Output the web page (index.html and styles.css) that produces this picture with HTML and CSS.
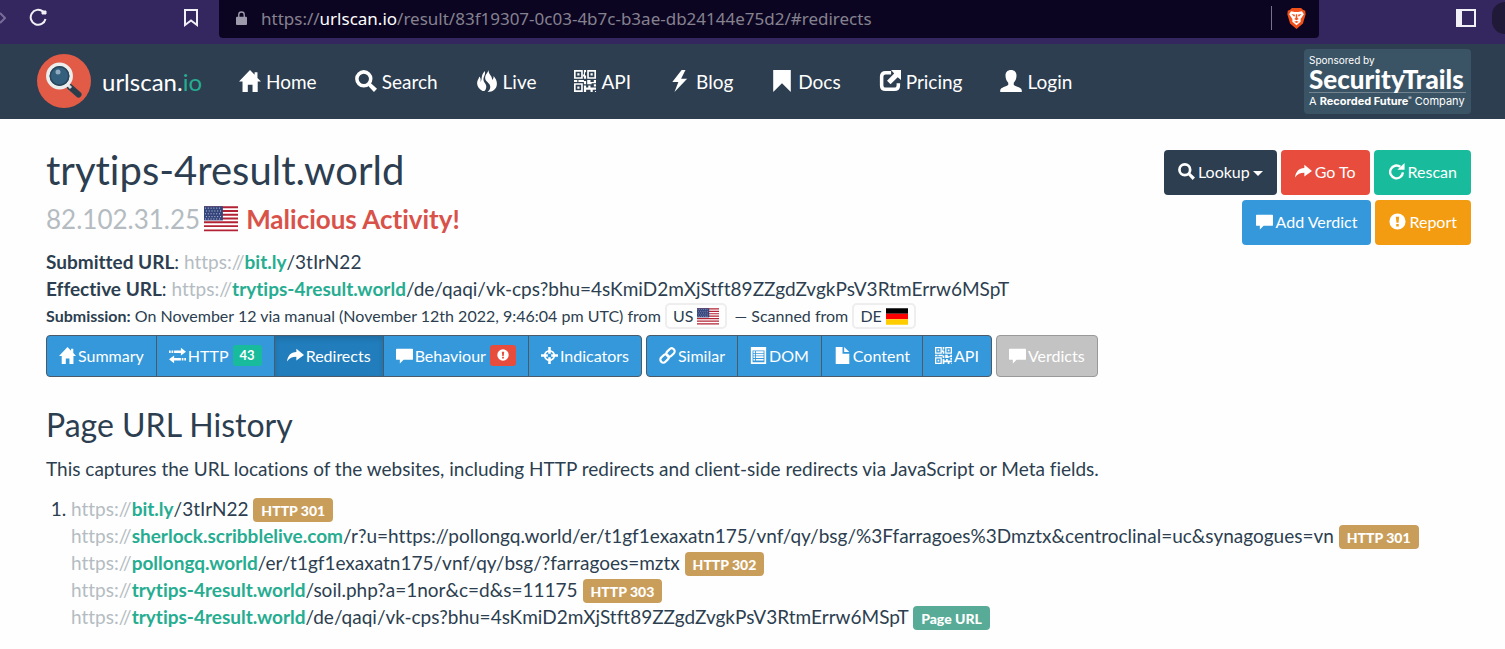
FILE: index.html
```html
<!DOCTYPE html>
<html lang="en">
<head>
  <meta charset="utf-8">
  <title>trytips-4result.world - urlscan.io</title>
  <meta name="viewport" content="width=device-width, initial-scale=1.0">
  <link rel="stylesheet" href="styles.css">
</head>
<body>
  <!-- Icon set -->
  <svg class="sprite" aria-hidden="true">
    <symbol id="home" viewBox="0 0 20 20"><path d="M10 0 L0 10.5 H3.2 V20 H8 V13.5 H12.3 V20 H17 V10.5 H20 L16.8 7.2 V2 H14.2 V4.4 Z"/></symbol>
    <symbol id="search" viewBox="0 0 20 20"><circle cx="8" cy="8" r="6.3" fill="none" stroke="currentColor" stroke-width="3.2"/><path d="M11.5 13.8 L14 11.5 L20 17 L17.2 20 Z"/></symbol>
    <symbol id="fire" viewBox="0 0 20 20"><path d="M8 1 C9 5 6.500 6 6.800 9 C7.300 12 10.500 13 9 17 C8.500 18.500 7.500 19.500 6 19 C3 17.500 1 15 1 12 C1 9.500 2.500 8.500 3 6 C4.500 7.500 4.500 9 4 11 C6 9 4 5 8 1 Z"/><path d="M11.500 0 C11 4 15 5 14.600 9 C15.800 8 16 7 16 5.500 C18 8 19 10 19 12.500 C19 17 15.500 20 10.500 20 C13 18 13.500 16 12.500 13.500 C11.500 11 8 10 8.300 6.500 C8.500 4 10.500 3 11.500 0 Z"/></symbol>
    <symbol id="qrcode" viewBox="0 0 20 20"><path fill-rule="evenodd" d="M0 0H8V8H0Z M1.500 1.500V6.500H6.500V1.500Z M12 0H20V8H12Z M13.500 1.500V6.500H18.500V1.500Z M0 12H8V20H0Z M1.500 13.500V18.500H6.500V13.500Z"/><path d="M3 3H5V5H3Z M15 3H17V5H15Z M3 15H5V17H3Z M9 0H11V2H10V5H11V8H9V6H8V4H9Z M0 9H3V11H0Z M4 9H9V10H11V13H9V11H4Z M12 9H15V11H18V9H20V12H16V13H12Z M9 14H11V16H13V18H11V20H9Z M13 14H15V16H20V18H17V20H15V18H13Z M18 13H20V15H18Z M19 19H20V20H19Z"/></symbol>
    <symbol id="flash" viewBox="0 0 20 20"><path d="M11.500 0 L3 11 H8.500 L5 20 L16.500 8 H11 L15 0 Z"/></symbol>
    <symbol id="bookmark" viewBox="0 0 20 20"><path d="M2 0H18V20L10 12L2 20Z"/></symbol>
    <symbol id="newwin" viewBox="0 0 20 20"><path d="M11 2.400 H6 Q2.400 2.400 2.400 6 V14 Q2.400 17.600 6 17.600 H14 Q17.600 17.600 17.600 14 V12" fill="none" stroke="currentColor" stroke-width="3.200"/><path d="M11 0H20V9L17 6.500L10.500 13L7.300 9.800L13.800 3.200Z"/></symbol>
    <symbol id="user" viewBox="0 0 20 20"><path d="M10 0 C13 0 15 2 15 5 C15 8 14 10 12.500 11.500 V13.500 C14 15.500 19.500 15.500 19.800 18.500 V20 H0.200 V18.500 C0.500 15.500 6 15.500 7.500 13.500 V11.500 C6 10 5 8 5 5 C5 2 7 0 10 0Z"/></symbol>
    <symbol id="share" viewBox="0 0 20 20"><path d="M0 17 C1 10 4.500 6.500 11 6 V2 L20 9.500 L11 16 V11.500 C6 11.500 3 13 0 17Z"/></symbol>
    <symbol id="repeat" viewBox="0 0 20 20"><path d="M14.500 4.500 A7.500 7.500 0 1 0 17.500 11" fill="none" stroke="currentColor" stroke-width="2.800"/><path d="M11 8H19.500V0Z"/></symbol>
    <symbol id="comment" viewBox="0 0 20 20"><path d="M1 2H19Q20 2 20 3V14Q20 15 19 15H9L4.500 19.500V15H1Q0 15 0 14V3Q0 2 1 2Z"/></symbol>
    <symbol id="alert" viewBox="0 0 20 20"><path fill-rule="evenodd" d="M10 0.500A9.500 9.500 0 1 1 10 19.500A9.500 9.500 0 1 1 10 0.500Z M8 4.500L8.800 11.500H11.200L12 4.500Z M8.500 13H11.500V16H8.500Z"/></symbol>
    <symbol id="transfer" viewBox="0 0 20 20"><path d="M0 4H2V7H0Z M3 4H5V7H3Z M6 4H14V1L20 5.500L14 10V7H6Z M20 13H18V16H20Z M17 13H15V16H17Z M14 13H6V10L0 14.500L6 19V16H14Z"/></symbol>
    <symbol id="target" viewBox="0 0 20 20"><circle cx="10" cy="10" r="5.500" fill="none" stroke="currentColor" stroke-width="2.200"/><path d="M8.500 0H11.500V8H8.500Z M8.500 12H11.500V20H8.500Z M0 8.500H8V11.500H0Z M12 8.500H20V11.500H12Z"/></symbol>
    <symbol id="link" viewBox="0 0 20 20"><g fill="none" stroke="currentColor" stroke-width="2.600"><rect x="8" y="3" width="11" height="7" rx="3.500" transform="rotate(-45 13.500 6.500)"/><rect x="1" y="10" width="11" height="7" rx="3.500" transform="rotate(-45 6.500 13.500)"/></g></symbol>
    <symbol id="listalt" viewBox="0 0 20 20"><path fill-rule="evenodd" d="M1 0H19V20H1Z M3 4V18H17V4Z"/><path d="M4 5H6V7H4Z M7 5H16V7H7Z M4 8H6V10H4Z M7 8H16V10H7Z M4 11H6V13H4Z M7 11H16V13H7Z M4 14H6V16H4Z M7 14H16V16H7Z"/></symbol>
    <symbol id="file" viewBox="0 0 20 20"><path d="M2 0H10V8H18V20H2Z M12 0L18 6H12Z"/></symbol>
    <symbol id="us" viewBox="0 0 36 27"><path fill="#fff" d="M0 0H36V27H0Z"/><path stroke="#b22234" stroke-width="2" d="M0 1H36M0 5H36M0 9H36M0 13H36M0 17H36M0 21H36M0 25.500H36"/><path fill="#34457c" d="M0 0H20V15H0Z"/><path stroke="#dde" stroke-width="1" stroke-dasharray="1 2" d="M1 2H19M2 5H19M1 8H19M2 11H19M1 13.500H19"/></symbol>
    <symbol id="de" viewBox="0 0 24 18"><path d="M0 0H24V6H0Z" fill="#000"/><path d="M0 6H24V12H0Z" fill="#f00"/><path d="M0 12H24V18H0Z" fill="#fc0"/></symbol>
  </svg>

  <!-- Browser toolbar -->
  <div class="toolbar">
    <svg class="forward" viewBox="0 0 6 12"><path d="M0 1L5 6L0 11"/></svg>
    <button class="tool reload" aria-label="Reload"><svg viewBox="0 0 20 20"><path d="M14 3.500A7.500 7.500 0 1 0 16.500 11"/><path class="dot" d="M13 3H17V6H13Z"/></svg></button>
    <button class="tool mark" aria-label="Bookmark"><svg viewBox="0 0 20 20"><path d="M4 2H16V17L10 12.500L4 17Z"/></svg></button>
    <div class="address">
      <svg class="lock" viewBox="0 0 12 15"><path d="M3 7V4A3 3 0 0 1 9 4V7" fill="none" stroke="#9d9aab" stroke-width="1.500"/><rect y="6" width="12" height="9" rx="1" fill="#9d9aab"/></svg>
      <span class="location">https://<b>urlscan.io</b>/result/83f19307-0c03-4b7c-b3ae-db24144e75d2/#redirects</span>
      <svg class="brave" viewBox="0 0 20 24"><path fill="#f1501b" d="M5 1H15L17 3L19.500 4L20 8L17 18L10 24L3 18L0 8L.5 4L3 3Z"/><path fill="#fff" d="M4 4.500L8 5.500H12L16 4.500L18 8L14.500 13L14.500 16L10 20L5.500 16L5.500 13L2 8Z"/><path fill="#f1501b" d="M4.500 7.500L8.500 8.500L7.500 10.500ZM15.500 7.500L11.500 8.500L12.500 10.500ZM9.300 8H10.700L11 12L12.500 13L10 14.500L7.500 13L9 12ZM7.500 16L10 15.300L12.500 16L10 17.500Z"/></svg>
    </div>
    <button class="tool panel" aria-label="Sidebar"><svg viewBox="0 0 20 20"><path d="M1 2H19V18H1Z"/><path class="solid" d="M1 2H5V18H1Z"/></svg></button>
    <span class="profile"></span>
  </div>

  <!-- Site header -->
  <header class="navbar">
    <a class="brand" href="#">
      <svg class="logo" viewBox="0 0 54 54"><circle cx="27" cy="27" r="27" fill="#e15b47"/><path d="M33 33L41.500 40.500" stroke="#2b3d4b" stroke-width="6" stroke-linecap="round"/><path d="M30 30L34 34" stroke="#d9dcdd" stroke-width="3"/><circle cx="22.500" cy="22" r="11.700" fill="#34607d" stroke="#eceeee" stroke-width="3.500"/><circle cx="22.500" cy="22" r="9.200" fill="none" stroke="#2b4659" stroke-width="1.500"/><circle cx="21" cy="18" r="2.500" fill="#90abc0"/></svg>
      <span>urlscan.<span class="tld">io</span></span>
    </a>
    <nav class="menu">
      <a href="#"><svg class="icon"><use href="#home"/></svg>Home</a>
      <a href="#"><svg class="icon"><use href="#search"/></svg>Search</a>
      <a href="#"><svg class="icon"><use href="#fire"/></svg>Live</a>
      <a href="#"><svg class="icon"><use href="#qrcode"/></svg>API</a>
      <a href="#"><svg class="icon"><use href="#flash"/></svg>Blog</a>
      <a href="#"><svg class="icon"><use href="#bookmark"/></svg>Docs</a>
      <a href="#"><svg class="icon"><use href="#newwin"/></svg>Pricing</a>
      <a href="#"><svg class="icon"><use href="#user"/></svg>Login</a>
    </nav>
    <a class="sponsor" href="#">
      <span class="sponsor-by">Sponsored by</span>
      <span class="sponsor-name">SecurityTrails</span>
      <span class="sponsor-of">A <b>Recorded Future</b><sup>®</sup> Company</span>
    </a>
  </header>

  <main class="container">
    <div class="summary">
      <div class="result">
        <h1>trytips-4result.world</h1>
        <h2 class="verdict"><span class="muted">82.102.31.25</span><svg class="flag-lg"><use href="#us"/></svg><b>Malicious Activity!</b></h2>
        <p class="url"><b>Submitted URL</b>: <span class="muted">https://</span><b class="domain">bit.ly</b>/3tIrN22</p>
        <p class="url"><b>Effective URL</b>: <span class="muted">https://</span><b class="domain">trytips-4result.world</b>/de/qaqi/vk-cps?bhu=4sKmiD2mXjStft89ZZgdZvgkPsV3RtmErrw6MSpT</p>
        <p class="submission"><b>Submission:</b> On November 12 via manual (November 12th 2022, 9:46:04 pm UTC) from <span class="country">US <svg class="flag"><use href="#us"/></svg></span> <span class="scanned">— Scanned from</span> <span class="country">DE <svg class="flag"><use href="#de"/></svg></span></p>
      </div>
      <div class="actions">
        <div class="row">
          <button class="btn lookup"><svg class="icon"><use href="#search"/></svg>Lookup<span class="caret"></span></button>
          <button class="btn goto"><svg class="icon"><use href="#share"/></svg>Go To</button>
          <button class="btn rescan"><svg class="icon"><use href="#repeat"/></svg>Rescan</button>
        </div>
        <div class="row">
          <button class="btn add"><svg class="icon"><use href="#comment"/></svg>Add Verdict</button>
          <button class="btn report"><svg class="icon"><use href="#alert"/></svg>Report</button>
        </div>
      </div>
    </div>

    <div class="tabs">
      <div class="group">
        <button class="tab"><svg class="icon"><use href="#home"/></svg>Summary</button>
        <button class="tab"><svg class="icon"><use href="#transfer"/></svg>HTTP <span class="count">43</span></button>
        <button class="tab active"><svg class="icon"><use href="#share"/></svg>Redirects</button>
        <button class="tab"><svg class="icon"><use href="#comment"/></svg>Behaviour <span class="count danger"><svg><use href="#alert"/></svg></span></button>
        <button class="tab"><svg class="icon"><use href="#target"/></svg>Indicators</button>
      </div>
      <div class="group">
        <button class="tab"><svg class="icon"><use href="#link"/></svg>Similar</button>
        <button class="tab"><svg class="icon"><use href="#listalt"/></svg>DOM</button>
        <button class="tab"><svg class="icon"><use href="#file"/></svg>Content</button>
        <button class="tab"><svg class="icon"><use href="#qrcode"/></svg>API</button>
      </div>
      <div class="group">
        <button class="tab off" disabled><svg class="icon"><use href="#comment"/></svg>Verdicts</button>
      </div>
    </div>

    <h2 class="section">Page URL History</h2>
    <p class="lead">This captures the URL locations of the websites, including HTTP redirects and client-side redirects via JavaScript or Meta fields.</p>
    <ol class="history">
      <li>
        <div><span class="muted">https://</span><b class="domain">bit.ly</b>/3tIrN22 <span class="label">HTTP 301</span></div>
        <div><span class="muted">https://</span><b class="domain">sherlock.scribblelive.com</b>/r?u=https://pollongq.world/er/t1gf1exaxatn175/vnf/qy/bsg/%3Ffarragoes%3Dmztx&amp;centroclinal=uc&amp;synagogues=vn <span class="label">HTTP 301</span></div>
        <div><span class="muted">https://</span><b class="domain">pollongq.world</b>/er/t1gf1exaxatn175/vnf/qy/bsg/?farragoes=mztx <span class="label">HTTP 302</span></div>
        <div><span class="muted">https://</span><b class="domain">trytips-4result.world</b>/soil.php?a=1nor&amp;c=d&amp;s=11175 <span class="label">HTTP 303</span></div>
        <div><span class="muted">https://</span><b class="domain">trytips-4result.world</b>/de/qaqi/vk-cps?bhu=4sKmiD2mXjStft89ZZgdZvgkPsV3RtmErrw6MSpT <span class="label page">Page URL</span></div>
      </li>
    </ol>
  </main>
</body>
</html>
```
FILE: styles.css
```css
* {
  box-sizing: border-box;
}
body {
  margin: 0;
  font-family: Lato, sans-serif;
  font-size: 19px;
  line-height: 27px;
  font-variant-ligatures: none;
  color: #2c3e50;
  background: #fefefe;
}
a {
  color: inherit;
  text-decoration: none;
}
button {
  font-family: inherit;
  cursor: pointer;
}
h1, h2, p, ol {
  margin: 0;
  font-weight: 400;
}
svg {
  fill: currentColor;
}
.sprite {
  display: none;
}

/* Browser toolbar */
.toolbar {
  display: flex;
  height: 44px;
  padding-bottom: 8px;
  align-items: center;
  color: #f2f0f7;
  background: #34275f;
}
.tool {
  width: 20px;
  height: 20px;
  padding: 0;
  border: 0;
  background: none;
  color: inherit;
}
.tool svg {
  display: block;
  fill: none;
  stroke: currentColor;
  stroke-width: 2;
}
.tool .solid {
  fill: currentColor;
}
.tool .dot {
  fill: currentColor;
  stroke-width: 1;
}
.forward {
  width: 6px;
  height: 12px;
  fill: none;
  stroke: #776d98;
  stroke-width: 2;
}
.reload {
  margin-left: 23px;
}
.mark {
  margin-left: 132px;
}
.address {
  flex: 1;
  display: flex;
  align-items: center;
  align-self: flex-start;
  height: 38px;
  margin-left: 18px;
  padding: 0 12px 2px 17px;
  border-radius: 0 0 4px 4px;
  background: #0c0522;
}
.lock {
  width: 11px;
  height: 14px;
}
.location {
  flex: 1;
  margin-left: 14px;
  font-family: "Noto Sans", sans-serif;
  font-size: 17px;
  color: #85828f;
}
.location b {
  font-weight: 400;
  color: #fff;
}
.brave {
  width: 36px;
  height: 24px;
  padding: 1px 0 1px 14px;
  border-left: 1px solid #77728a;
}
.panel {
  margin: 0 16px 0 137px;
}
.profile {
  width: 13px;
  height: 32px;
  border-radius: 16px 0 0 16px;
  background: #211938;
}

/* Header */
.navbar {
  display: flex;
  align-items: center;
  height: 75px;
  padding: 0 34px 1px 37px;
  color: #fff;
  background: #2c3e50;
}
.brand {
  display: flex;
  align-items: center;
  gap: 11px;
  font-size: 24px;
}
.logo {
  width: 54px;
  height: 54px;
}
.tld {
  color: #26ad91;
}
.menu {
  display: flex;
  flex: 1;
  gap: 38px;
  margin-left: 37px;
  font-size: 19px;
}
.menu a {
  display: flex;
  align-items: center;
  gap: 5px;
}
.menu .icon {
  width: 22px;
  height: 22px;
}
.sponsor {
  width: 167px;
  height: 65px;
  padding: 5px;
  border-radius: 4px;
  font-family: Inter, sans-serif;
  white-space: nowrap;
  background: #3a5465;
}
.sponsor span {
  display: block;
}
.sponsor-by {
  font-size: 10px;
  line-height: 12px;
}
.sponsor-name {
  font-family: Lato, sans-serif;
  font-size: 26px;
  font-weight: 900;
  line-height: 26px;
  border-bottom: 1px solid #71848f;
}
.sponsor-of {
  font-size: 11px;
  line-height: 16px;
}
.sponsor sup {
  font-size: 5px;
  line-height: 0;
}

/* Result */
.container {
  padding: 30px 34px 0 46px;
}
.summary {
  display: flex;
  justify-content: space-between;
  height: 186px;
}
h1 {
  font-size: 40px;
  line-height: 42px;
}
.verdict {
  margin: 13px 0 14px;
  font-size: 26px;
  line-height: 30px;
}
.verdict b {
  color: #d9524a;
}
.muted {
  color: #b4bcc2;
}
.domain {
  color: #26ad91;
}
.flag-lg {
  width: 34px;
  height: 26px;
  margin: 0 8px 0 4px;
  vertical-align: -3px;
}
.submission {
  font-size: 16px;
}
.country {
  display: inline-block;
  padding: 0 6px;
  border: 2px solid #eee;
  border-radius: 5px;
  line-height: 22px;
}
.flag {
  width: 22px;
  height: 17px;
  vertical-align: -3px;
}
.scanned {
  margin-left: 3px;
}
.actions {
  display: flex;
  flex-direction: column;
  gap: 5px;
  align-items: flex-end;
  padding-top: 1px;
}
.row {
  display: flex;
  gap: 4px;
}
.btn {
  display: flex;
  align-items: center;
  gap: 3px;
  height: 45px;
  padding: 0 14px 2px;
  border: 0;
  border-radius: 4px;
  font-size: 16px;
  color: #fff;
}
.btn .icon, .tab .icon {
  width: 17px;
  height: 17px;
}
.lookup {
  background: #2c3e50;
}
.goto {
  background: #e74c3c;
}
.rescan {
  background: #18bc9c;
}
.add {
  background: #3498db;
}
.report {
  background: #f39c12;
}
.caret {
  margin-top: 4px;
  border: 5px solid transparent;
  border-top-color: #fff;
  border-bottom: 0;
}

/* Tabs */
.tabs {
  display: flex;
  gap: 4px;
}
.group {
  display: flex;
}
.tab {
  display: flex;
  align-items: center;
  gap: 2px;
  height: 42px;
  margin-left: -1px;
  padding: 0 12px 1px;
  border: 1px solid #4b5a66;
  font-size: 16px;
  color: #fff;
  background: #3498db;
}
.tab:first-child {
  margin-left: 0;
  border-radius: 4px 0 0 4px;
}
.tab:last-child {
  border-radius: 0 4px 4px 0;
}
.tab:only-child {
  border-radius: 4px;
}
.active {
  background: #217dbb;
  box-shadow: inset 0 3px 5px rgba(0, 0, 0, 0.13);
}
.off {
  border-color: #999;
  background: #c3c3c3;
}
.count {
  height: 21px;
  margin-left: 2px;
  padding: 0 7px;
  border-radius: 3px;
  font-size: 13px;
  font-weight: 700;
  line-height: 21px;
  background: #18bc9c;
}
.count svg {
  display: block;
  width: 12px;
  height: 20px;
}
.danger {
  background: #e74c3c;
}

/* Redirect history */
.section {
  margin: 29px 0 11px;
  font-size: 32px;
  line-height: 38px;
}
.history {
  margin-top: 13px;
  padding-left: 25px;
}
.label {
  padding: 4px 8px 3px;
  border-radius: 4px;
  font-size: 14px;
  font-weight: 900;
  line-height: 14px;
  color: #fff;
  background: #c99e5b;
}
.page {
  background: #57ab97;
}
```
